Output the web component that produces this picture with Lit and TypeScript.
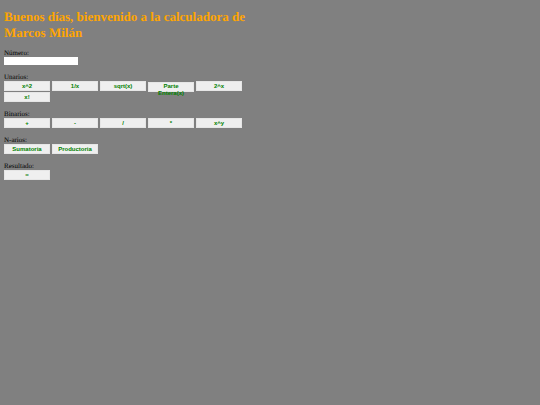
import { LitElement, html, css } from "lit";
import { customElement, property } from "lit/decorators.js";

interface Operation {
  label: string;
  overflow?: boolean;
}

const UNARY: Operation[] = [
  { label: "x^2" },
  { label: "1/x" },
  { label: "sqrt(x)" },
  { label: "Parte Entera(x)", overflow: true },
  { label: "2^x" },
  { label: "x!" },
];
const BINARY: Operation[] = ["+", "-", "/", "*", "x^y"].map((label) => ({ label }));
const NARY: Operation[] = ["Sumatoria", "Productoria"].map((label) => ({ label }));
const RESULT: Operation[] = [{ label: "=" }];

@customElement("operation-group")
export class OperationGroup extends LitElement {
  @property() heading = "";
  @property({ attribute: false }) operations: Operation[] = [];

  static styles = css`
    :host {
      display: block;
    }
    .heading {
      margin: 0;
      font: inherit;
    }
    .keys {
      display: flex;
      flex-wrap: wrap;
      gap: 1px 2px;
    }
    .key {
      box-sizing: border-box;
      width: 46px;
      height: 10px;
      padding: 0;
      border: 1px solid #e6e6e6;
      background: #efefef;
      color: green;
      font: bold 6px/7px "Liberation Sans", Arial, sans-serif;
      text-align: center;
      cursor: pointer;
    }
    .key.overflow {
      display: flex;
      align-items: flex-start;
      padding: 0 8px;
      margin-top: 1px;
      margin-bottom: -1px;
    }
  `;

  render() {
    return html`
      <h2 class="heading" id="title">${this.heading}</h2>
      <div class="keys" role="group" aria-labelledby="title">
        ${this.operations.map(
          (op) => html`<button
            type="button"
            class="key ${op.overflow ? "overflow" : ""}"
          >${op.label}</button>`
        )}
      </div>
    `;
  }
}

@customElement("app-root")
export class AppRoot extends LitElement {
  static styles = css`
    :host {
      display: block;
      box-sizing: border-box;
      min-height: 100vh;
      padding: 9px 4px;
      background: #808080;
      color: #000;
      font: 7px/8px "Liberation Serif", "Times New Roman", serif;
      text-rendering: geometricPrecision;
    }
    .calculator {
      display: flex;
      flex-direction: column;
      gap: 8px;
      width: 50%;
      min-width: 240px;
    }
    .title {
      margin: 0;
      color: orange;
      font-size: 13px;
      line-height: 16px;
      font-weight: bold;
    }
    .field {
      display: flex;
      flex-direction: column;
      align-items: flex-start;
    }
    .number {
      box-sizing: border-box;
      width: 74px;
      height: 8px;
      padding: 0 1px;
      border: 0;
      background: #fff;
      font: 6px/8px "Liberation Sans", Arial, sans-serif;
    }
  `;

  render() {
    return html`
      <main class="calculator">
        <h1 class="title">Buenos días, bienvenido a la calculadora de Marcos Milán</h1>
        <div class="field">
          <label for="number">Número:</label>
          <input class="number" id="number" type="text" />
        </div>
        <operation-group heading="Unarios:" .operations=${UNARY}></operation-group>
        <operation-group heading="Binarios:" .operations=${BINARY}></operation-group>
        <operation-group heading="N-arios:" .operations=${NARY}></operation-group>
        <operation-group heading="Resultado:" .operations=${RESULT}></operation-group>
      </main>
    `;
  }
}
